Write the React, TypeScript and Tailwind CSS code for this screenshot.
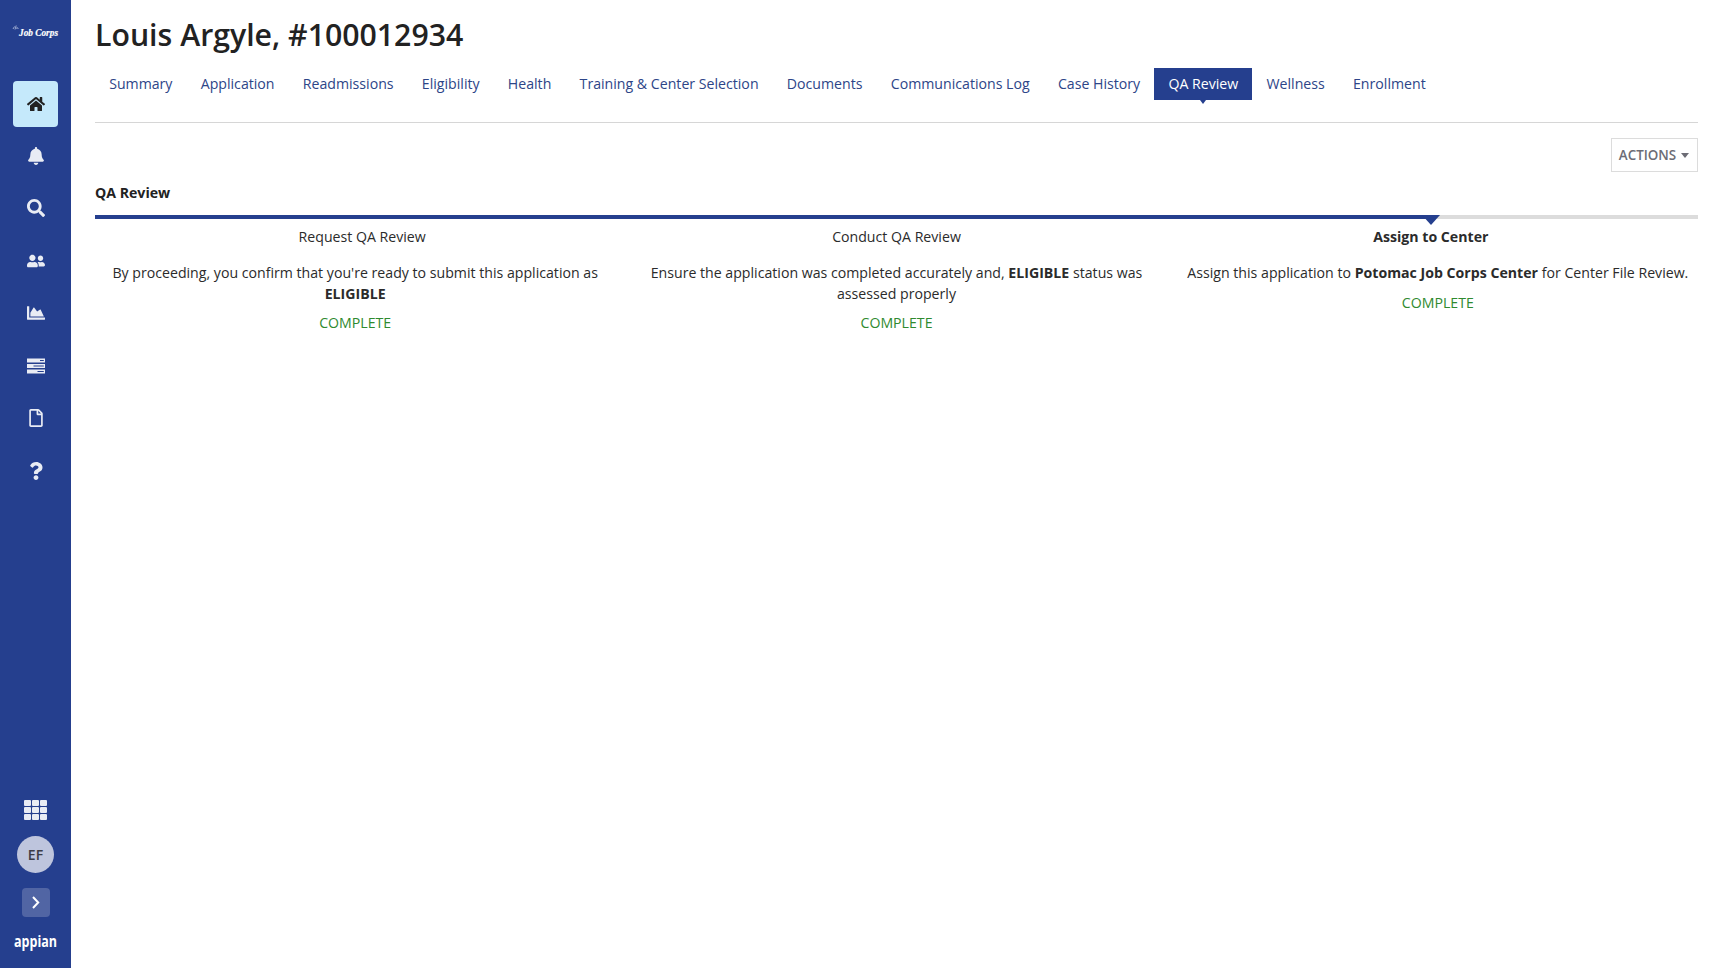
import React from "react";
import {
  FaBell,
  FaChartArea,
  FaHome,
  FaQuestion,
  FaRegFile,
  FaSearch,
  FaUserFriends,
} from "react-icons/fa";

const TasksIcon: React.FC = () => (
  <svg width="18" height="16" viewBox="0 0 18 16" fill="currentColor">
    <path
      fillRule="evenodd"
      d="M0 .5h18v4H0zM13 2v1h3.800V2zM0 6h18v4H0zM6.500 7.500v1h10.300v-1zM0 11.500h18v4H0zM10.500 13v1h6.300v-1z"
    />
  </svg>
);

const GridIcon: React.FC = () => (
  <div className="grid h-5 w-[23px] grid-cols-3 gap-x-[1.5px] gap-y-[1px]">
    {Array.from({ length: 9 }, (_, i) => (
      <span key={i} className="rounded-[1px] bg-[#e9ecf4]" />
    ))}
  </div>
);

const navItems = [
  { name: "Notifications", icon: <FaBell /> },
  { name: "Search", icon: <FaSearch /> },
  { name: "Users", icon: <FaUserFriends /> },
  { name: "Reports", icon: <FaChartArea /> },
  { name: "Tasks", icon: <TasksIcon /> },
  { name: "Documents", icon: <FaRegFile /> },
  { name: "Help", icon: <FaQuestion /> },
];

const tabs = [
  "Summary",
  "Application",
  "Readmissions",
  "Eligibility",
  "Health",
  "Training & Center Selection",
  "Documents",
  "Communications Log",
  "Case History",
  "QA Review",
  "Wellness",
  "Enrollment",
];

const Sidebar: React.FC = () => (
  <aside className="flex w-[71px] shrink-0 flex-col items-center bg-[#253f8e] text-[18px] text-[#e9ecf4]">
    <div className="flex h-[81px] items-start pt-[21px]">
      <svg className="overflow-visible" width="54" height="24" viewBox="0 0 54 24" fill="#fff">
        <path
          d="M4 8l1.500-2.500M6 8.500l1.200-4M7.800 8l.4-2M8.600 8l.8-.8"
          stroke="#b9c3e0"
          strokeWidth="0.800"
        />
        <text
          x="10"
          y="15"
          fontFamily="Liberation Serif"
          fontStyle="italic"
          fontWeight="700"
          fontSize="11"
          textLength="39"
          lengthAdjust="spacingAndGlyphs"
          stroke="#fff"
          strokeWidth="0.200"
        >
          Job Corps
        </text>
      </svg>
    </div>
    <button className="flex h-[46px] w-[45px] items-center justify-center rounded-[4px] bg-[#c5e9fb] pb-px text-[#222]">
      <FaHome />
    </button>
    <nav className="mt-[2.6px] flex flex-col items-center">
      {navItems.map((item) => (
        <button key={item.name} aria-label={item.name} className="flex h-[52.5px] items-center">
          {item.icon}
        </button>
      ))}
    </nav>
    <div className="mt-auto flex flex-col items-center">
      <GridIcon />
      <div className="mt-4 flex size-[37px] items-center justify-center rounded-full bg-[#bec5dd] text-[14px] font-semibold text-[#3c3c46]">
        EF
      </div>
      <button className="mt-[15px] flex h-[29px] w-7 items-center justify-center rounded-[4px] bg-[#5165a4]">
        <svg width="8" height="13" viewBox="0 0 8 13" fill="none" stroke="#fff" strokeWidth="2">
          <path d="M1 1l5.200 5.500L1 12" />
        </svg>
      </button>
      <svg
        className="mt-[10px] mb-[11px] overflow-visible"
        width="50"
        height="30"
        viewBox="0 0 50 30"
        fill="#fff"
      >
        <text
          x="3"
          y="19.500"
          fontFamily="Open Sans"
          fontWeight="700"
          fontSize="16.500"
          textLength="43"
          lengthAdjust="spacingAndGlyphs"
        >
          appian
        </text>
      </svg>
    </div>
  </aside>
);

const Tabs: React.FC = () => (
  <nav className="flex h-[55px] items-start border-b border-[#d6d6d6] leading-[20px] text-[#2d4588]">
    {tabs.map((tab) =>
      tab === "QA Review" ? (
        <div key={tab} className="relative bg-[#253f8e] px-[14.13px] py-[6px] whitespace-nowrap text-white">
          {tab}
          <span className="absolute top-full left-1/2 -ml-[3px] border-x-3 border-t-4 border-x-transparent border-t-[#253f8e]" />
        </div>
      ) : (
        <div key={tab} className="px-[14.13px] py-[6px] whitespace-nowrap">
          {tab}
        </div>
      ),
    )}
  </nav>
);

const Milestone: React.FC = () => (
  <>
    <div className="relative mt-[12px] h-1 bg-[#dcdcdc]">
      <div className="h-1 w-5/6 bg-[#253f8e]" />
      <span className="absolute top-0 left-5/6 -ml-[9px] border-x-[9px] border-t-[10px] border-x-transparent border-t-[#253f8e]" />
    </div>
    <div className="mt-[8px] grid grid-cols-3 text-center">
      <div>Request QA Review</div>
      <div>Conduct QA Review</div>
      <div className="font-bold">Assign to Center</div>
    </div>
  </>
);

const App: React.FC = () => {
  return (
    <div className="flex h-[968px] w-full bg-white font-['Open_Sans',sans-serif] text-[14.15px] leading-[20px] text-[#2b2b2b]">
      <Sidebar />
      <main className="flex min-w-0 flex-1 flex-col pr-6 pl-6">
        <h1 className="mt-[14px] h-[54px] text-[30.25px] leading-[41px] font-semibold text-[#222]">
          Louis Argyle, #100012934
        </h1>
        <Tabs />
        <button className="mt-[15px] flex h-[34px] w-[87px] items-center justify-center gap-[5px] self-end border border-[#dcdcdc] pr-px text-[13.4px] font-semibold text-[#6c6c75]">
          ACTIONS
          <span className="border-x-4 border-t-5 border-x-transparent border-t-[#6c6c75]" />
        </button>
        <h2 className="mt-[11px] font-bold text-[#222]">QA Review</h2>
        <Milestone />
        <div className="mt-[16px] grid grid-cols-3 gap-x-[21px] text-center leading-[20.5px]">
          <div>
            <p>
              By proceeding, you confirm that you're ready to submit this application as
              <br />
              <b>ELIGIBLE</b>
            </p>
            <p className="mt-[9px] text-[#2f8a2f]">COMPLETE</p>
          </div>
          <div>
            <p>
              Ensure the application was completed accurately and, <b>ELIGIBLE</b> status was
              <br />
              assessed properly
            </p>
            <p className="mt-[9px] text-[#2f8a2f]">COMPLETE</p>
          </div>
          <div>
            <p>
              Assign this application to <b>Potomac Job Corps Center</b> for Center File Review.
            </p>
            <p className="mt-[9.5px] text-[#2f8a2f]">COMPLETE</p>
          </div>
        </div>
      </main>
    </div>
  );
};

export default App;
